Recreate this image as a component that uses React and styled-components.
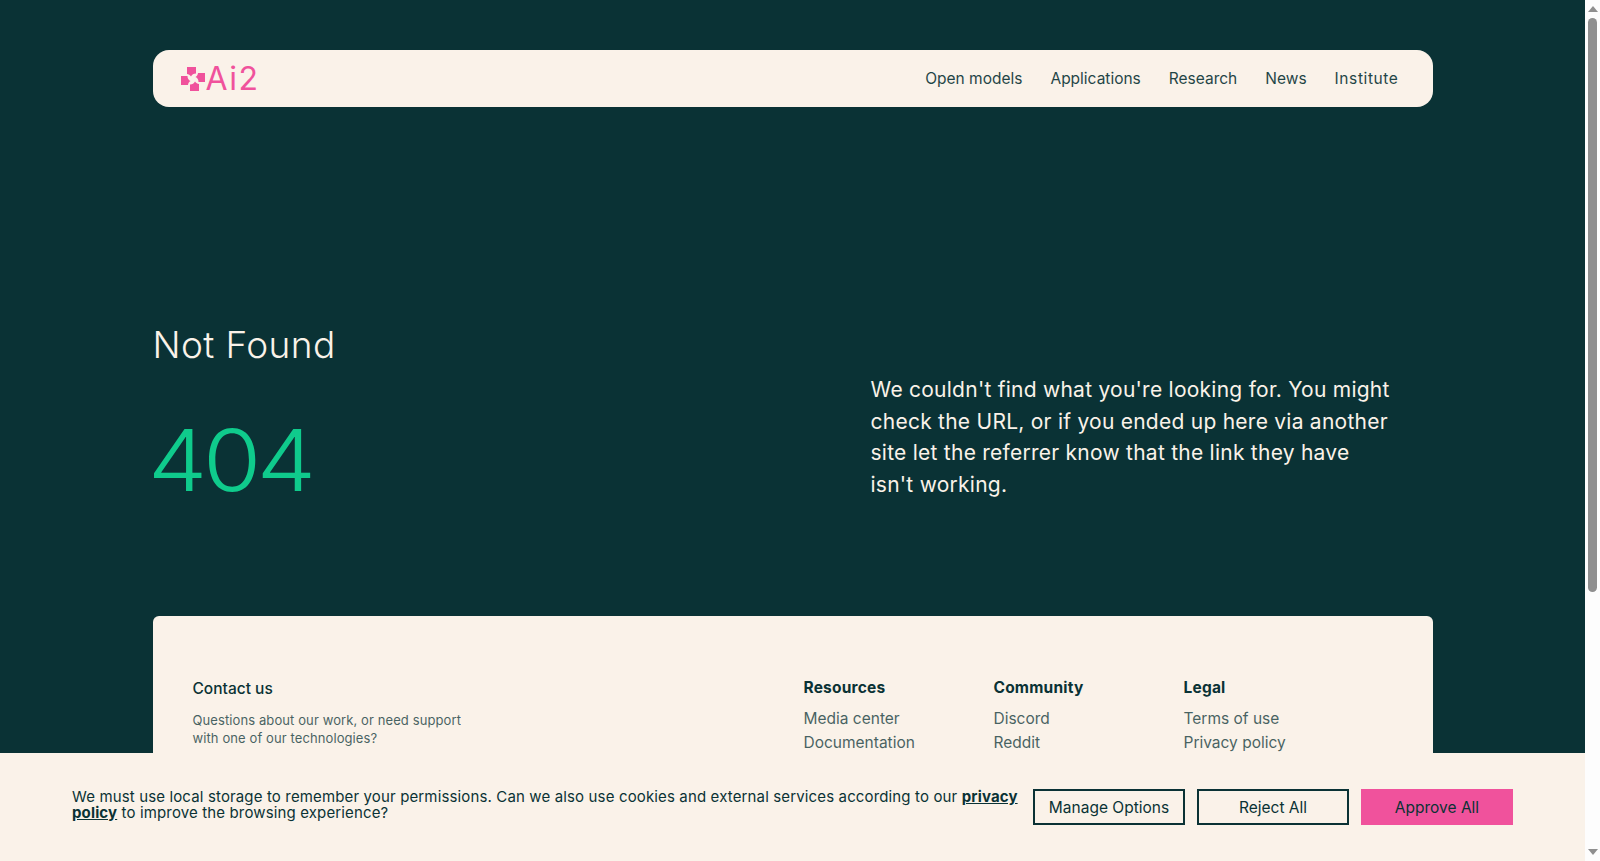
import React from 'react';
import styled, { createGlobalStyle } from 'styled-components';

const Global = createGlobalStyle`
  html, body {
    margin: 0;
    padding: 0;
    height: 100%;
    overflow: hidden;
    background: #0a3235;
    font-family: Inter, "Liberation Sans", sans-serif;
    color: #0a3235;
  }
  * { box-sizing: border-box; }
`;

const Shell = styled.div`
  display: flex;
  height: 100vh;
`;

const Viewport = styled.div`
  position: relative;
  flex: 1;
  overflow: hidden;
`;

const Rail = styled.div`
  width: 15px;
  display: flex;
  flex-direction: column;
  align-items: center;
  padding-top: 6px;
  background: #fdfdfd;
`;

const Thumb = styled.div`
  width: 9px;
  height: 574px;
  margin-top: 6px;
  margin-bottom: 257px;
  border-radius: 5px;
  background: #8f8f8f;
`;

const Page = styled.div`
  width: 1280px;
  margin: 0 auto;
  padding-top: 50px;
  padding-bottom: 24px;
`;

const Header = styled.header`
  height: 57px;
  background: #faf2e9;
  border-radius: 16px;
  display: flex;
  align-items: center;
  justify-content: space-between;
  padding: 0 34px 0 28px;
`;

const Logo = styled.a`
  display: flex;
  align-items: center;
  gap: 1px;
  color: #f0529c;
  font-size: 32px;
  font-weight: 400;
  letter-spacing: 1.5px;
  line-height: 1;
`;

const Nav = styled.nav`
  display: flex;
  gap: 28px;
`;

const NavLink = styled.a`
  font-size: 15.5px;
  letter-spacing: ${p => (p.$wide ? '0.6px' : '0')};
  color: #0a3235;
  opacity: 0.9;
`;

const Main = styled.main`
  display: grid;
  grid-template-columns: 718px 1fr;
  align-items: end;
  height: 509px;
  padding-bottom: 116px;
`;

const Title = styled.h1`
  margin: 0 0 55px;
  font-size: 37px;
  font-weight: 300;
  letter-spacing: 0.4px;
  line-height: 44px;
  color: #faf2e9;
`;

const Code = styled.div`
  margin-left: -5px;
  font-size: 85px;
  font-weight: 350;
  line-height: 78px;
  letter-spacing: -4px;
  color: #0fcb8c;
  transform: scaleX(1.11);
  transform-origin: left center;
`;

const Message = styled.p`
  margin: 0;
  width: 528px;
  font-size: 21px;
  letter-spacing: 0.25px;
  line-height: 31.5px;
  color: #faf2e9;
`;

const Footer = styled.footer`
  background: #faf2e9;
  border-radius: 6px;
  height: 604px;
  padding: 60px 40px;
  display: grid;
  grid-template-columns: 611px repeat(3, 190px);
`;

const Contact = styled.div`
  padding-top: 3px;
`;

const ContactTitle = styled.h3`
  margin: 0 0 12px;
  font-size: 15.5px;
  font-weight: 500;
  line-height: 20px;
`;

const ContactText = styled.p`
  margin: 0;
  width: 280px;
  font-size: 13px;
  letter-spacing: 0.1px;
  line-height: 18px;
  opacity: 0.75;
`;

const ColTitle = styled.h4`
  margin: 0 0 7px;
  font-size: 15.5px;
  font-weight: 700;
  letter-spacing: 0.2px;
  line-height: 24px;
`;

const ColLink = styled.a`
  display: block;
  font-size: 15.5px;
  line-height: 24px;
  opacity: 0.75;
`;

const Cookie = styled.div`
  position: absolute;
  left: 0;
  right: 0;
  bottom: 0;
  height: 108px;
  background: #faf2e9;
  padding: 0 72px;
  display: flex;
  align-items: center;
  justify-content: space-between;
`;

const CookieText = styled.p`
  margin: 0 0 5px;
  width: 950px;
  font-size: 15px;
  line-height: 16px;
  letter-spacing: 0.14px;
`;

const Bold = styled.a`
  font-weight: 700;
  text-decoration: underline;
`;

const Buttons = styled.div`
  display: flex;
  gap: 12px;
`;

const Btn = styled.button`
  width: 152px;
  height: 36px;
  font: inherit;
  font-size: 15.5px;
  color: #0a3235;
  background: ${p => (p.$primary ? '#f0529c' : 'transparent')};
  border: 2px solid ${p => (p.$primary ? '#f0529c' : '#0a3235')};
  padding: 0;
`;

const footerCols = [
  { title: 'Resources', links: ['Media center', 'Documentation'] },
  { title: 'Community', links: ['Discord', 'Reddit'] },
  { title: 'Legal', links: ['Terms of use', 'Privacy policy'] },
];

const navItems = ['Open models', 'Applications', 'Research', 'News', 'Institute'];

const petal = 'M6 0H15V6.5C12.5 6.5 11 7.5 10 9.5C9 8 7.5 7 6 7Z';

export default function App() {
  return (
    <Shell>
      <Global />
      <Viewport>
        <Page>
          <Header>
            <Logo>
              <svg width="24" height="24" viewBox="0 0 24 24" fill="#f0529c">
                {[0, 90, 180, 270].map(a => (
                  <path key={a} d={petal} transform={`rotate(${a} 12 12)`} />
                ))}
              </svg>
              Ai2
            </Logo>
            <Nav>
              {navItems.map(n => <NavLink key={n} $wide={n === 'Institute'}>{n}</NavLink>)}
            </Nav>
          </Header>
          <Main>
            <div>
              <Title>Not Found</Title>
              <Code>404</Code>
            </div>
            <Message>
              We couldn't find what you're looking for. You might check the URL, or if you ended up here via another site let the referrer know that the link they have isn't working.
            </Message>
          </Main>
          <Footer>
            <Contact>
              <ContactTitle>Contact us</ContactTitle>
              <ContactText>Questions about our work, or need support with one of our technologies?</ContactText>
            </Contact>
            {footerCols.map(c => (
              <div key={c.title}>
                <ColTitle>{c.title}</ColTitle>
                {c.links.map(l => <ColLink key={l}>{l}</ColLink>)}
              </div>
            ))}
          </Footer>
        </Page>
        <Cookie>
          <CookieText>
            We must use local storage to remember your permissions. Can we also use cookies and external services according to our <Bold>privacy policy</Bold> to improve the browsing experience?
          </CookieText>
          <Buttons>
            <Btn>Manage Options</Btn>
            <Btn>Reject All</Btn>
            <Btn $primary>Approve All</Btn>
          </Buttons>
        </Cookie>
      </Viewport>
      <Rail>
        <svg width="10" height="6" viewBox="0 0 10 6" fill="#8f8f8f"><path d="M5 0L10 6H0Z" /></svg>
        <Thumb />
        <svg width="10" height="6" viewBox="0 0 10 6" fill="#8f8f8f"><path d="M0 0H10L5 6Z" /></svg>
      </Rail>
    </Shell>
  );
}
